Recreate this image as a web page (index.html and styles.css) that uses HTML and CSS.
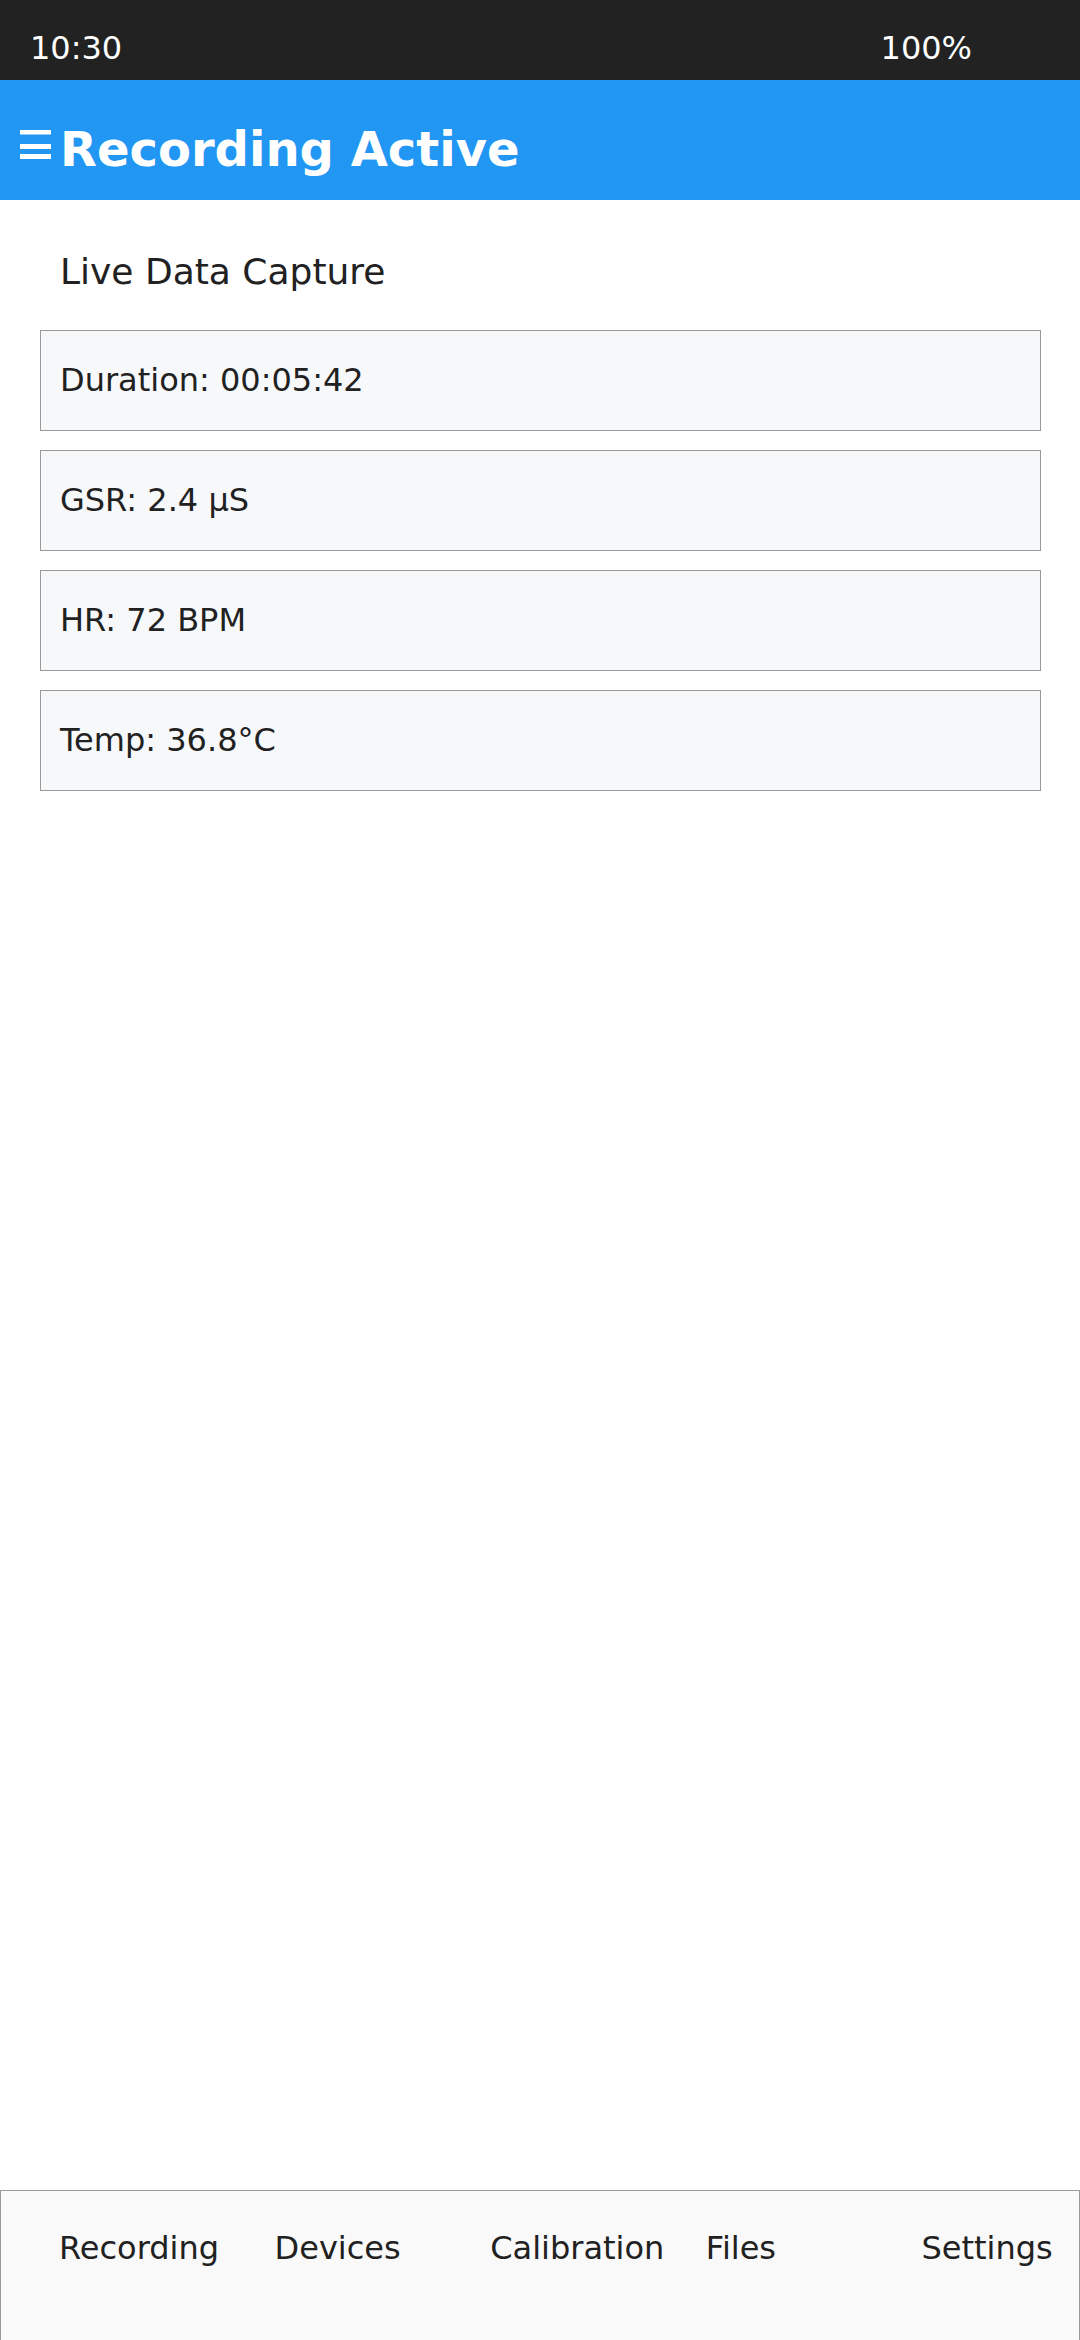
FILE: index.html
```html
<!DOCTYPE html>
<html lang="en">
<head>
<meta charset="utf-8">
<title>Recording Active</title>
<link rel="stylesheet" href="styles.css">
</head>
<body>
<div class="screen">
  <div class="statusbar">
    <span class="status-time">10:30</span>
    <span class="status-battery">100%</span>
  </div>
  <header class="appbar">
    <svg class="menu-icon" width="31" height="29" viewBox="0 0 31 29" aria-hidden="true">
      <rect x="0" y="0" width="31" height="4.5" fill="#fff"/>
      <rect x="0" y="14" width="31" height="5" fill="#fff"/>
      <rect x="0" y="24" width="31" height="5" fill="#fff"/>
    </svg>
    <h1 class="appbar-title">Recording Active</h1>
  </header>
  <main class="content">
    <h2 class="section-title">Live Data Capture</h2>
    <div class="cards">
      <div class="card">Duration: 00:05:42</div>
      <div class="card">GSR: 2.4 µS</div>
      <div class="card">HR: 72 BPM</div>
      <div class="card">Temp: 36.8°C</div>
    </div>
  </main>
  <nav class="bottom-nav">
    <span class="nav-item">Recording</span>
    <span class="nav-item">Devices</span>
    <span class="nav-item">Calibration</span>
    <span class="nav-item">Files</span>
    <span class="nav-item">Settings</span>
  </nav>
</div>
</body>
</html>
```

FILE: styles.css
```css
html, body {
  margin: 0;
  padding: 0;
  background: #ffffff;
}

body {
  font-family: "DejaVu Sans", "Liberation Sans", sans-serif;
  color: #212121;
}

.screen {
  width: 1080px;
  height: 2340px;
  display: flex;
  flex-direction: column;
  overflow: hidden;
}

.statusbar {
  height: 80px;
  box-sizing: border-box;
  flex: 0 0 auto;
  background: #222222;
  color: #ffffff;
  display: flex;
  justify-content: space-between;
  align-items: flex-start;
  padding: 30px 108px 0 30px;
  font-size: 32px;
  line-height: 37px;
}

.appbar {
  height: 120px;
  box-sizing: border-box;
  flex: 0 0 auto;
  background: #2196f3;
  display: flex;
  align-items: flex-start;
  padding: 41px 0 0 20px;
}

.menu-icon {
  display: block;
  margin-top: 9px;
  flex: 0 0 auto;
}

.appbar-title {
  margin: 0 0 0 9px;
  font-size: 48px;
  font-weight: bold;
  line-height: 56px;
  color: #ffffff;
}

.content {
  flex: 1 1 auto;
  padding: 51px 40px 0 40px;
}

.section-title {
  margin: 0;
  padding-left: 20px;
  font-size: 36px;
  font-weight: normal;
  line-height: 42px;
}

.cards {
  margin-top: 37px;
  display: flex;
  flex-direction: column;
  gap: 19px;
}

.card {
  height: 101px;
  box-sizing: border-box;
  width: 1001px;
  border: 1px solid #999999;
  background: #f7f8fa;
  display: flex;
  align-items: center;
  padding: 0 19px;
  font-size: 32px;
  line-height: 37px;
}

.bottom-nav {
  flex: 0 0 auto;
  height: 150px;
  box-sizing: border-box;
  border: 1px solid #999999;
  border-bottom: none;
  background: #f9f9f9;
  display: grid;
  grid-template-columns: repeat(5, 1fr);
  align-items: start;
  padding-top: 39px;
  font-size: 32px;
  line-height: 37px;
}

.nav-item {
  padding-left: 58px;
  white-space: nowrap;
  min-width: 0;
}
```
